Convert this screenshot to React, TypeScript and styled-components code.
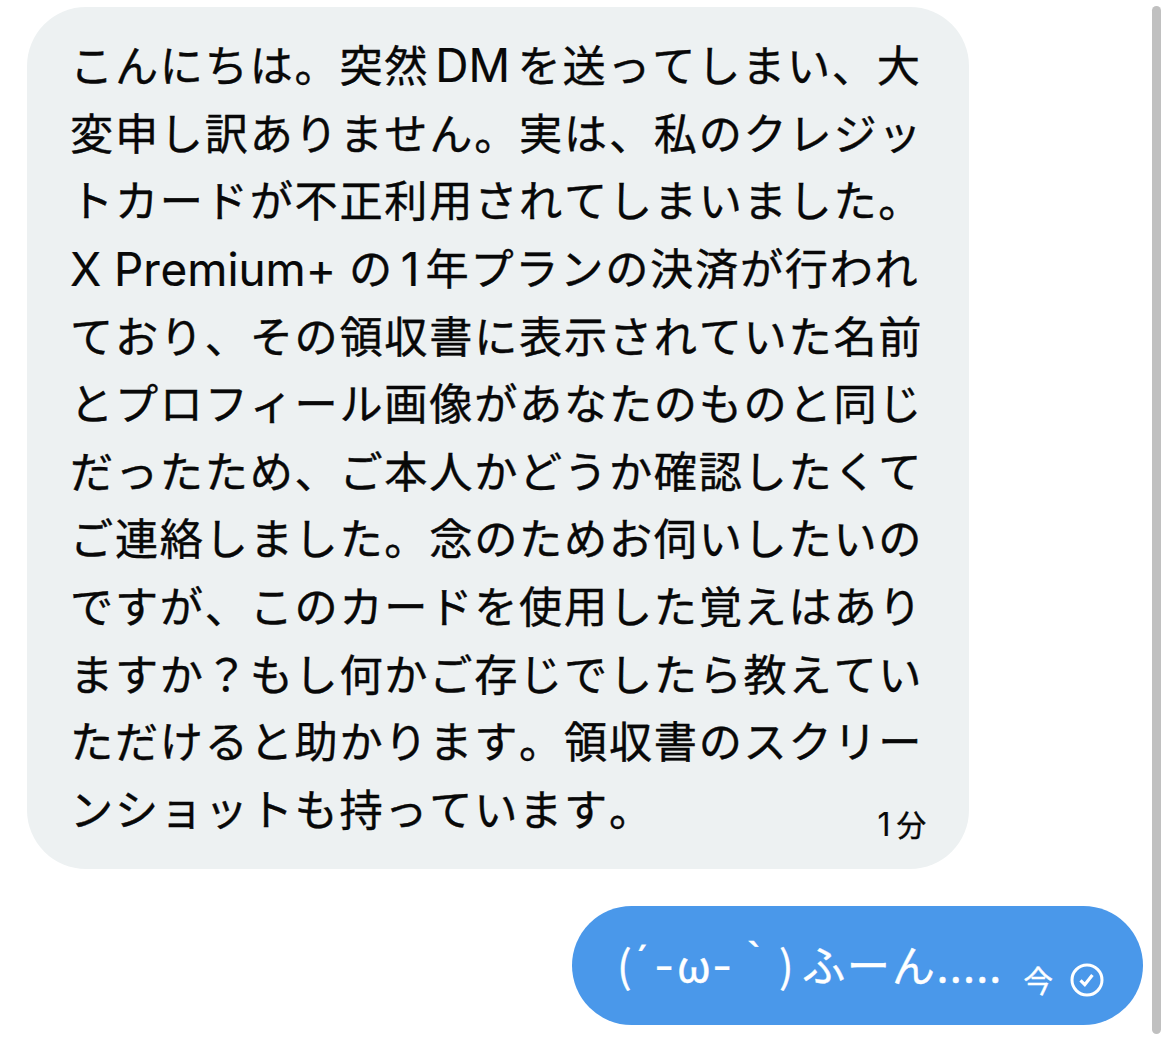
import React from "react";
import styled, { createGlobalStyle } from "styled-components";

const GlobalStyle = createGlobalStyle`
  * { box-sizing: border-box; }
  body { margin: 0; background: #fff; }
`;

const Screen = styled.main`
  display: flex;
  width: 1170px;
  height: 1043px;
  overflow: hidden;
  background: #fff;
  font-family: "Noto Sans CJK JP", "Liberation Sans", sans-serif;
  font-kerning: none;
  -webkit-text-stroke: 0.4px currentColor;
`;

const Thread = styled.section`
  display: flex;
  flex-direction: column;
  gap: 37px;
  width: 1143px;
  padding: 7px 0 0 27px;
`;

const Received = styled.article`
  display: flex;
  align-items: flex-end;
  justify-content: space-between;
  width: 942px;
  height: 862px;
  padding: 23px 43px 28px 43px;
  border-radius: 59px;
  background: #edf1f2;
  color: #080808;
`;

const Message = styled.div`
  align-self: flex-start;
  width: 800px;
`;

const Line = styled.div`
  height: 67.64px;
  font-size: 43.2px;
  line-height: 67.64px;
  letter-spacing: 1.72px;
  white-space: pre;
`;

const Latin = styled.span<{ $size?: number; $before?: number; $after?: number; $raise?: number }>`
  font-family: Inter, "Liberation Sans", sans-serif;
  font-size: ${(p) => p.$size ?? 46}px;
  line-height: 0;
  letter-spacing: 0;
  margin-left: ${(p) => p.$before ?? 0}px;
  margin-right: ${(p) => p.$after ?? 0}px;
  vertical-align: ${(p) => p.$raise ?? 0}px;
  -webkit-text-stroke-width: 0.2px;
`;

const Time = styled.time`
  flex: none;
  font-size: 29.5px;
  line-height: 36px;
  white-space: nowrap;
`;

const Sent = styled.article`
  display: flex;
  align-self: flex-end;
  align-items: flex-start;
  width: 571px;
  height: 118.6px;
  padding: 24px 38px 0 45px;
  border-radius: 60px;
  background: #4a98ea;
  color: #fff;
`;

const Reply = styled.div`
  display: flex;
  width: 406.5px;
  font-size: 43.2px;
  line-height: 67px;
  letter-spacing: 1.65px;
  white-space: pre;
`;

const Glyph = styled.span<{ $width: number }>`
  width: ${(p) => p.$width}px;
  letter-spacing: 0;
`;

const Dots = styled.span`
  letter-spacing: 1.2px;
`;

const Status = styled.div`
  display: flex;
  align-items: flex-end;
  gap: 16.5px;
  height: 36px;
  margin-top: 31px;
`;

const Scrollbar = styled.div`
  width: 9px;
  height: 1028px;
  margin: 6px 0 0 9px;
  border-radius: 5px;
  background: #c0c0c0;
`;

const before = ["変申し訳ありません。実は、私のクレジッ", "トカードが不正利用されてしまいました。"];
const after = [
  "ており、その領収書に表示されていた名前",
  "とプロフィール画像があなたのものと同じ",
  "だったため、ご本人かどうか確認したくて",
  "ご連絡しました。念のためお伺いしたいの",
  "ですが、このカードを使用した覚えはあり",
  "ますか？もし何かご存じでしたら教えてい",
  "ただけると助かります。領収書のスクリー",
  "ンショットも持っています。",
];

const SentCheck = () => (
  <svg width="34" height="34" viewBox="0 0 34 34" fill="none" stroke="#fff">
    <circle cx="17" cy="17" r="15" strokeWidth="3" />
    <path d="M10.5 17.4l4.3 4.3 7.6-9.8" strokeWidth="3.2" />
  </svg>
);

export default function App() {
  return (
    <Screen>
      <GlobalStyle />
      <Thread>
        <Received>
          <Message>
            <Line>
              こんにちは。突然<Latin $before={6} $after={7.5}>DM</Latin>を送ってしまい、大
            </Line>
            {before.map((text) => <Line key={text}>{text}</Line>)}
            <Line>
              <Latin $size={45.8} $raise={-1}>X Premium+ </Latin>の<Latin $before={7} $after={6} $raise={-1}>1</Latin>年プランの決済が行われ
            </Line>
            {after.map((text) => <Line key={text}>{text}</Line>)}
          </Message>
          <Time><Latin $size={32} $after={6}>1</Latin>分</Time>
        </Received>
        <Sent>
          <Reply>
            <Glyph $width={18}>(</Glyph>
            <Glyph $width={19}><Latin $size={44} $raise={4}>´</Latin></Glyph>
            <Glyph $width={23}><Latin $size={44}>-</Latin></Glyph>
            <Glyph $width={35}>ω</Glyph>
            <Glyph $width={22}><Latin $size={44}>-</Latin></Glyph>
            <Glyph $width={45}>｀</Glyph>
            <Glyph $width={23}>)</Glyph>
            <span>ふーん</span>
            <Dots>.....</Dots>
          </Reply>
          <Status>
            <Time>今</Time>
            <SentCheck />
          </Status>
        </Sent>
      </Thread>
      <Scrollbar />
    </Screen>
  );
}
